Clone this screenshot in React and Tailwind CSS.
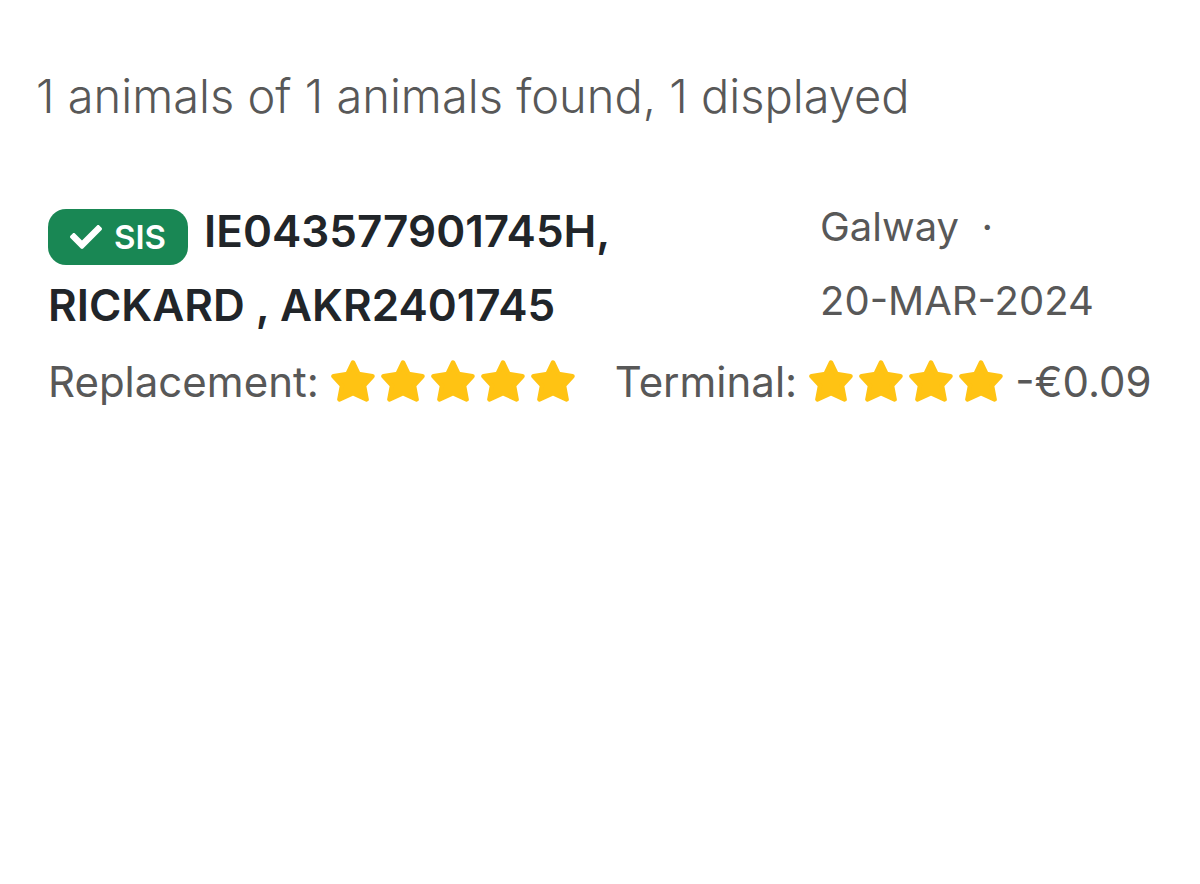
import React from 'react';
import { FaCheck } from 'react-icons/fa';

const animal = {
  tag: 'IE043577901745H,',
  name: 'RICKARD , AKR2401745',
  county: 'Galway',
  born: '20-MAR-2024',
  replacement: 5,
  terminal: 4,
  terminalValue: '-€0.09',
};

function Star() {
  return (
    <svg viewBox="0 1 44 44" className="h-11 w-11" aria-hidden="true">
      <path
        d="M22 3.5 27.5 15 41.5 17.2 33 26.6 35.6 40.4 22 34.2 8.4 40.4 11 26.6 2.5 17.2 16.5 15Z"
        fill="currentColor"
        stroke="currentColor"
        strokeWidth="4.5"
        strokeLinejoin="round"
      />
    </svg>
  );
}

function Stars({ count }) {
  return (
    <span className="flex gap-[6px] text-[#ffc313]" role="img" aria-label={`${count} stars`}>
      {Array.from({ length: count }, (_, i) => (
        <Star key={i} />
      ))}
    </span>
  );
}

function Rating({ label, count, value }) {
  return (
    <div className="flex items-center gap-3">
      <span>{label}</span>
      <Stars count={count} />
      {value && <span>{value}</span>}
    </div>
  );
}

function AnimalCard({ item }) {
  return (
    <article className="mt-[62px] pr-2 pl-3">
      <div className="flex">
        <h2 className="w-[772px] pt-1 text-[44px] leading-[74px] font-semibold text-[#212529]">
          <span className="mt-1 mr-4 inline-flex h-14 items-center gap-3 rounded-[18px] bg-[#198754] px-[22px] align-middle text-[33px] text-white">
            <FaCheck className="h-8 w-8" />
            SIS
          </span>
          {item.tag}
          <br />
          {item.name}
        </h2>
        <div className="text-[40px] leading-[74px]">
          <p>{item.county} &nbsp;·</p>
          <p>{item.born}</p>
        </div>
      </div>
      <div className="mt-[3px] flex items-center gap-10 text-[42px] leading-[74px] whitespace-nowrap">
        <Rating label="Replacement:" count={item.replacement} />
        <Rating label="Terminal:" count={item.terminal} value={item.terminalValue} />
      </div>
    </article>
  );
}

function App() {
  return (
    <main className="min-h-screen bg-white px-9 pt-16 font-['Inter',sans-serif] text-[#585858]">
      <p className="text-[47px] leading-16 font-light">
        1 animals of 1 animals found, 1 displayed
      </p>
      <AnimalCard item={animal} />
    </main>
  );
}

export default App;
